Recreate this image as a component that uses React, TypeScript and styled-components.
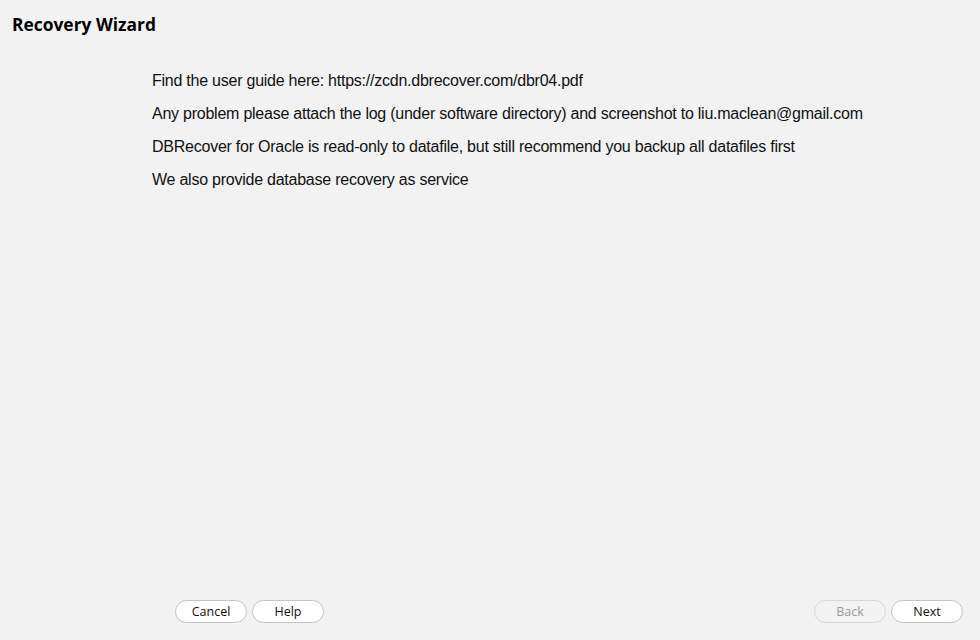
import React from "react";
import styled, { createGlobalStyle } from "styled-components";

const Global = createGlobalStyle`
  html, body { margin: 0; padding: 0; background: #f2f2f2; }
  #root { height: 640px; }
`;

const Page = styled.div`
  width: 980px;
  height: 640px;
  box-sizing: border-box;
  display: flex;
  flex-direction: column;
  background: #f2f2f2;
`;

const Title = styled.h1`
  margin: 0;
  padding: 11px 0 0 12px;
  height: 26px;
  font-family: "Open Sans", "Noto Sans", sans-serif;
  font-weight: 700;
  font-size: 17.4px;
  line-height: 26px;
  color: #000;
`;

const Messages = styled.div`
  flex: 1;
  display: flex;
  flex-direction: column;
  gap: 14px;
  padding: 34px 0 0 152px;
`;

const Line = styled.p`
  margin: 0;
  font-family: "Liberation Sans", Arial, sans-serif;
  font-size: 16px;
  line-height: 19px;
  color: #111;
  letter-spacing: -0.24px;
`;

const Footer = styled.div`
  display: flex;
  justify-content: space-between;
  padding: 0 17px 17px 175px;
`;

const Group = styled.div`
  display: flex;
  gap: 5px;
`;

const Button = styled.button<{ $disabled?: boolean }>`
  width: 72px;
  height: 23px;
  box-sizing: border-box;
  border-radius: 12px;
  border: 1px solid ${(p) => (p.$disabled ? "#d6d6d6" : "#c4c4c4")};
  background: ${(p) => (p.$disabled ? "#f2f2f2" : "#ffffff")};
  color: ${(p) => (p.$disabled ? "#9a9a9a" : "#111")};
  font-family: "Open Sans", "Noto Sans", sans-serif;
  font-size: 12.5px;
  line-height: 20px;
  padding: 0;
  cursor: default;
`;

export default function App() {
  return (
    <Page>
      <Global />
      <Title>Recovery Wizard</Title>
      <Messages>
        <Line>Find the user guide here: https://zcdn.dbrecover.com/dbr04.pdf</Line>
        <Line>Any problem please attach the log (under software directory) and screenshot to liu.maclean@gmail.com</Line>
        <Line>DBRecover for Oracle is read-only to datafile, but still recommend you backup all datafiles first</Line>
        <Line>We also provide database recovery as service</Line>
      </Messages>
      <Footer>
        <Group>
          <Button>Cancel</Button>
          <Button>Help</Button>
        </Group>
        <Group>
          <Button $disabled disabled>Back</Button>
          <Button>Next</Button>
        </Group>
      </Footer>
    </Page>
  );
}
